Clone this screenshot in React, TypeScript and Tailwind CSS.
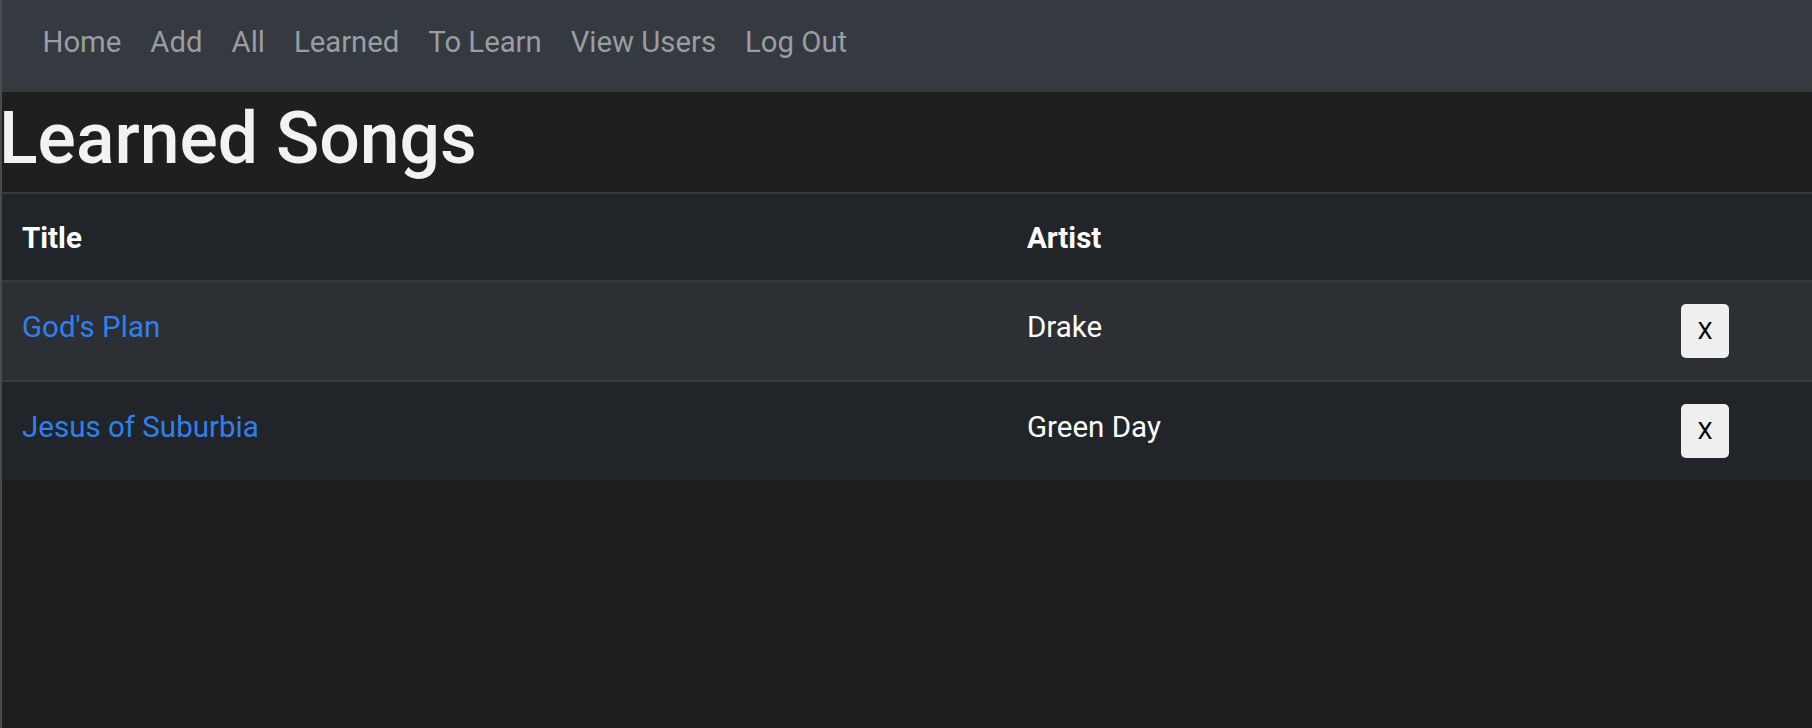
import React from "react";

const links = ["Home", "Add", "All", "Learned", "To Learn", "View Users", "Log Out"];

const songs = [
  { title: "God's Plan", artist: "Drake" },
  { title: "Jesus of Suburbia", artist: "Green Day" },
];

const App: React.FC = () => {
  return (
    <div
      className="min-h-[728px] bg-[#1f1f1f] border-l-2 border-[#4b4b4b]"
      style={{ fontFamily: 'Roboto, "Liberation Sans", Arial, sans-serif' }}
    >
      <nav className="h-[92px] bg-[#343a40] flex items-start pl-[26px] pt-[21px]">
        {links.map((link) => (
          <a key={link} className="px-[14.5px] text-[29.3px] leading-[42px] text-[#9a9da1] cursor-pointer">
            {link}
          </a>
        ))}
      </nav>

      <h1 className="text-[71.5px] leading-[84px] font-medium text-[#f2f2f2] -ml-[3px] pt-[5px] pb-[11px]">
        Learned Songs
      </h1>

      <div className="border-t-2 border-[#373b3e] text-[29.5px] leading-[42px]">
        <div className="grid grid-cols-[1005px_653px_1fr] bg-[#212529] border-b-2 border-[#373b3e]">
          <div className="px-[20px] pt-[23px] pb-[21px] font-bold text-white">Title</div>
          <div className="px-[20px] pt-[23px] pb-[21px] font-bold text-white">Artist</div>
          <div className="px-[21px] py-[22px]" />
        </div>

        {songs.map((song, index) => (
          <div
            key={song.title}
            className={
              index % 2 === 0
                ? "grid grid-cols-[1005px_653px_1fr] bg-[#2c3034] border-b-2 border-[#373b3e]"
                : "grid grid-cols-[1005px_653px_1fr] bg-[#212529]"
            }
          >
            <div className="px-[20px] pt-[24px]">
              <a className="text-[#2f80ed] cursor-pointer">{song.title}</a>
            </div>
            <div className="px-[20px] pt-[24px] text-white">{song.artist}</div>
            <div className="px-[21px] py-[22px]">
              <button className="w-[48px] h-[54px] rounded-[5px] bg-[#efefef] text-black text-[24px] leading-none flex items-center justify-center">
                X
              </button>
            </div>
          </div>
        ))}
      </div>
    </div>
  );
};

export default App;
